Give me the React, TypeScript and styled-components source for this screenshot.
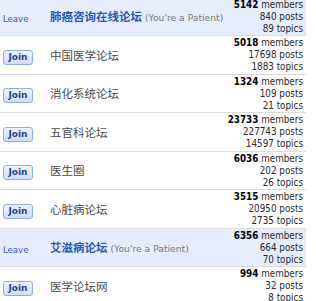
import React from "react";
import styled, { createGlobalStyle } from "styled-components";

const GlobalStyle = createGlobalStyle`
  body {
    margin: 0;
    background: #ffffff;
    font-family: "DejaVu Sans", "Noto Sans CJK SC", sans-serif;
  }
`;

const List = styled.div`
  width: 306px;
  margin-top: -2.5px;
`;

const Row = styled.div<{ member?: boolean }>`
  display: flex;
  align-items: center;
  height: 37.5px;
  border-bottom: 1px solid #dcdcdc;
  background: ${(p) => (p.member ? "#e5ecfc" : "#ffffff")};
`;

const ActionCell = styled.div`
  width: 50px;
  padding-left: 3px;
  box-sizing: border-box;
  flex-shrink: 0;
`;

const JoinButton = styled.button`
  width: 30px;
  height: 15px;
  padding: 0;
  border: 1px solid #8eaee2;
  border-radius: 3px;
  background: linear-gradient(#eef3fd, #cfddf6);
  color: #1f4290;
  font-family: "DejaVu Sans", sans-serif;
  font-size: 9px;
  font-weight: bold;
  line-height: 13px;
`;

const LeaveLink = styled.span`
  color: #3a5fae;
  font-size: 9.5px;
  font-stretch: condensed;
`;

const NameCell = styled.div`
  flex: 1;
  display: flex;
  align-items: baseline;
  gap: 3px;
  white-space: nowrap;
`;

const GroupName = styled.span<{ member?: boolean }>`
  font-family: "Noto Sans CJK SC", sans-serif;
  font-size: 11.5px;
  font-weight: ${(p) => (p.member ? 700 : 400)};
  color: ${(p) => (p.member ? "#2659b8" : "#4a4a4a")};
`;

const PatientNote = styled.span`
  color: #7a7a7a;
  font-size: 9.2px;
`;

const Stats = styled.div`
  align-self: flex-start;
  padding-top: 1px;
  padding-right: 3px;
  text-align: right;
  font-size: 9.8px;
  font-stretch: condensed;
  line-height: 12px;
  color: #2a2a2a;
`;

const Count = styled.b`
  color: #000000;
`;

type Group = {
  name: string;
  member: boolean;
  members: number;
  posts: number;
  topics: number;
};

const groups: Group[] = [
  { name: "肺癌咨询在线论坛", member: true, members: 5142, posts: 840, topics: 89 },
  { name: "中国医学论坛", member: false, members: 5018, posts: 17698, topics: 1883 },
  { name: "消化系统论坛", member: false, members: 1324, posts: 109, topics: 21 },
  { name: "五官科论坛", member: false, members: 23733, posts: 227743, topics: 14597 },
  { name: "医生圈", member: false, members: 6036, posts: 202, topics: 26 },
  { name: "心脏病论坛", member: false, members: 3515, posts: 20950, topics: 2735 },
  { name: "艾滋病论坛", member: true, members: 6356, posts: 664, topics: 70 },
  { name: "医学论坛网", member: false, members: 994, posts: 32, topics: 8 },
];

export default function App() {
  return (
    <>
      <GlobalStyle />
      <List>
        {groups.map((g) => (
          <Row key={g.name} member={g.member}>
            <ActionCell>
              {g.member ? <LeaveLink>Leave</LeaveLink> : <JoinButton>Join</JoinButton>}
            </ActionCell>
            <NameCell>
              <GroupName member={g.member}>{g.name}</GroupName>
              {g.member && <PatientNote>(You're a Patient)</PatientNote>}
            </NameCell>
            <Stats>
              <div>
                <Count>{g.members}</Count> members
              </div>
              <div>{g.posts} posts</div>
              <div>{g.topics} topics</div>
            </Stats>
          </Row>
        ))}
      </List>
    </>
  );
}
